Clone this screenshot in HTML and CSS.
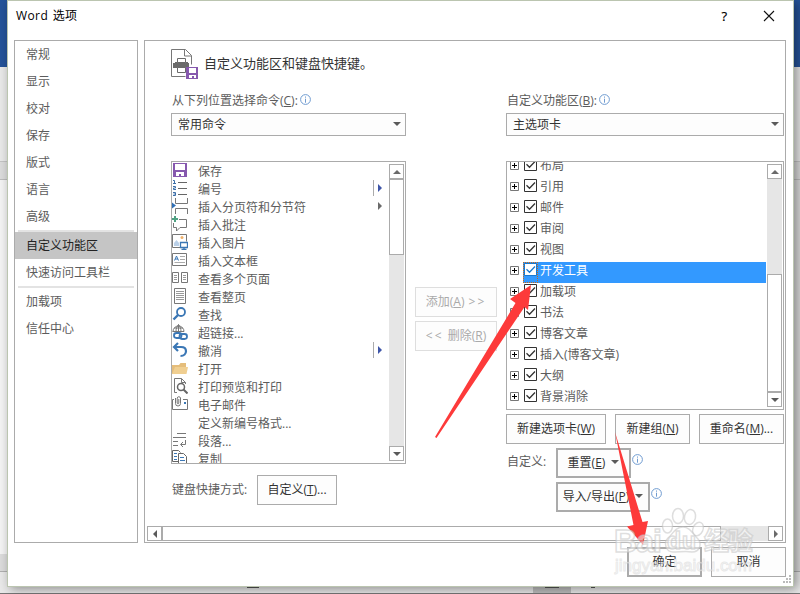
FILE: index.html
```html
<!DOCTYPE html>
<html lang="zh-CN">
  <head>
    <meta charset="UTF-8" />
    <meta name="viewport" content="width=device-width, initial-scale=1.0" />
    <title>Word 选项</title>
    <link rel="stylesheet" href="styles.css">
  </head>

  <body>
    <div class="desktop">
      <div class="app-title"></div>
      <div class="app-ribbon"></div>
      <div class="app-ruler"></div>
      <div class="app-page"></div>
      <div class="app-scroll"></div>
      <div class="app-status">
        <span class="tick t1"></span>
        <span class="view"><span class="tick"></span></span>
        <span class="tick t3"></span>
      </div>
    </div>

    <div class="dialog">
      <div class="titlebar">
        <span class="caption">Word 选项</span>
        <span class="help">?</span>
        <svg class="close" width="12" height="12" viewBox="0 0 12 12"><path d="M1 1l10 10M11 1L1 11" stroke="#111" stroke-width="1.1" /></svg>
      </div>

      <div class="body">
        <ul class="nav">
          <li>常规</li>
          <li>显示</li>
          <li>校对</li>
          <li>保存</li>
          <li>版式</li>
          <li>语言</li>
          <li>高级</li>
          <li class="sep"></li>
          <li class="selected">自定义功能区</li>
          <li>快速访问工具栏</li>
          <li class="sep"></li>
          <li>加载项</li>
          <li>信任中心</li>
        </ul>

        <div class="main">
          <div class="heading">
            <svg width="28" height="32" viewBox="0 0 28 32">
              <path d="M.5 1.500h14l6 6v9M.5 1.500v27h14M13.500 1.500v6.500h7" fill="none" stroke="#777" />
              <path d="M2 15h2v-1h13v1h1v5H2z" fill="#6a6a6a" />
              <path d="M6.500 10.500h8v4h-8zM6.500 19.500h8v5h-8z" fill="#fff" stroke="#6a6a6a" />
              <path d="M15 19h12v12H15z" fill="#8658ae" />
              <path d="M18 20h7v5h-7zM18 27h7v3h-2v-2h-2v2h-3z" fill="#fff" />
            </svg>
            <span>自定义功能区和键盘快捷键。</span>
          </div>

          <div class="columns">
            <div class="left">
              <div class="label">从下列位置选择命令(<u>C</u>):<svg class="info" width="11" height="11" viewBox="0 0 11 11"><circle cx="5.500" cy="5.500" r="4.900" /><path d="M5.500 2.500v1.200M5.500 4.700v4" /></svg></div>
              <div class="select"><span>常用命令</span><i class="down"></i></div>
              <div class="list commands">
                <ul>
                  <li><svg viewBox="0 0 16 16"><path d="M1 1h14v14H1z" fill="#8658ae" /><path d="M3 2h10v6H3zM4 10h8v4H9v-2H7v2H4z" fill="#fff" /></svg>保存</li>
                  <li><svg viewBox="0 0 16 16"><path d="M6 2.500h9M6 8.500h9M6 14.500h9" stroke="#666" /><path d="M1 .5h1.500v3M1 3.500h3M1 6.500h2.500v1.500H1.500v1.500H4M1 12.500h2.500v3H1M1.500 14h2" fill="none" stroke="#3b6ea8" /></svg>编号<i class="right split"></i></li>
                  <li><svg viewBox="0 0 16 16"><path d="M3.500 0v5.500h12V0M3.500 16v-5.500h12V16" fill="none" stroke="#777" /><path d="M0 4.500l4 3-4 3z" fill="#2f6fb5" /></svg>插入分页符和分节符<i class="right plain"></i></li>
                  <li><svg viewBox="0 0 16 16"><path d="M7 3.500h7.500v8H8l-3.500 3.500v-3.500h-3V7" fill="none" stroke="#777" /><path d="M3 0v6M0 3h6" stroke="#4fa283" stroke-width="2" /></svg>插入批注</li>
                  <li><svg viewBox="0 0 16 16"><path d="M8 13.500H.5V.5h14v7" fill="none" stroke="#777" /><circle cx="10" cy="3.500" r="1.500" fill="#efb06a" /><path d="M2 12V9l2.500-3L7 9v3z" fill="#b9cfe7" /><path d="M8.500 8.500h7v5h-7zM12 14v2M9.500 15.500h5" fill="none" stroke="#3b77b5" stroke-width="1.300" /></svg>插入图片</li>
                  <li><svg viewBox="0 0 16 16"><path d="M.5 1.500h14v12H.5z" fill="none" stroke="#777" /><path d="M8 4.500h5M8 7.500h5M2.500 10.500H13" stroke="#aaa" /><path d="M2.500 8.500L4.500 4l2 4.500M3 7h3" fill="none" stroke="#3b77b5" /></svg>插入文本框</li>
                  <li><svg viewBox="0 0 16 16"><path d="M.5 2.500h6v10h-6zM9.500 2.500h6v10h-6z" fill="none" stroke="#777" /><path d="M2 5.500h3M2 7.500h3M2 9.500h3M11 5.500h3M11 7.500h3M11 9.500h3" stroke="#999" /></svg>查看多个页面</li>
                  <li><svg viewBox="0 0 16 16"><path d="M2.500.5h11v15h-11z" fill="none" stroke="#777" /><path d="M4 3.500h8M4 5.500h8M4 7.500h8M4 9.500h8M4 11.500h8" stroke="#999" /></svg>查看整页</li>
                  <li><svg viewBox="0 0 16 16"><circle cx="9" cy="6" r="4" fill="none" stroke="#3b77b5" stroke-width="1.800" /><path d="M6 9l-4.500 4.500" stroke="#3b77b5" stroke-width="2.400" /></svg>查找</li>
                  <li><svg viewBox="0 0 16 16"><path d="M1 7.500a5.500 5.500 0 0 1 11 0M2 4h9M.5 7.500H12M6.500.5v7M4 7.500c0-3 1-5.500 2.500-7C8 2 9 4.500 9 7.500" fill="none" stroke="#777" /><rect x="2" y="9" width="7.500" height="5" rx="2.400" fill="none" stroke="#3b77b5" stroke-width="1.800" /><rect x="7.500" y="10" width="7.500" height="5" rx="2.400" fill="none" stroke="#3b77b5" stroke-width="1.800" /></svg>超链接...</li>
                  <li><svg viewBox="0 0 16 16"><path d="M2 5h7c3.500 0 5 2 5 4.300S12 14 8.500 14M6 1L2 5l4 4" fill="none" stroke="#3b77b5" stroke-width="2.200" /></svg>撤消<i class="right split"></i></li>
                  <li><svg viewBox="0 0 16 16"><path d="M0 14V5h7l1.500-2H14v11z" fill="#e5bd7a" /><path d="M0 14l3-7h13l-1.500 7z" fill="#f0cf91" /></svg>打开</li>
                  <li><svg viewBox="0 0 16 16"><path d="M5 14.500H2.500V.5h7l4 4V6M9.500.5v4h4" fill="none" stroke="#777" /><circle cx="9" cy="9" r="3.500" fill="#fff" stroke="#666" stroke-width="1.500" /><path d="M11.500 11.500l4 4" stroke="#666" stroke-width="2" /></svg>打印预览和打印</li>
                  <li><svg viewBox="0 0 16 16"><path d="M2 3.500H.5v10h15v-10H11" fill="none" stroke="#777" /><path d="M3.500 2v5.500a2.500 2.500 0 0 0 5 0V2a1.700 1.700 0 0 0-3.300 0v5a.8.8 0 0 0 1.600 0V3" fill="none" stroke="#777" /><path d="M12 6h2v2h-2z" fill="#3b77b5" /></svg>电子邮件</li>
                  <li><svg viewBox="0 0 16 16"></svg>定义新编号格式...</li>
                  <li><svg viewBox="0 0 16 16"><path d="M5 1.500h9M1 5.500h13M1 9.500h5M1 13.500h5M13.500 8v4.500H9M11 10l-2.500 2.500L11 15" fill="none" stroke="#777" /></svg>段落...</li>
                  <li><svg viewBox="0 0 16 16"><path d="M6 11.500H.5V.5h6l2 2M6.500 3.500h5l3 3v9h-8z" fill="none" stroke="#666" /><path d="M2 3.500h3M2 6.500h3M2 9.500h3M8 7.500h4M8 10.500h5M8 13.500h5" stroke="#3b77b5" /></svg>复制</li>
                </ul>
                <div class="vscroll">
                  <span class="btn"><i class="up"></i></span>
                  <span class="thumb short"></span>
                  <span class="track"></span>
                  <span class="btn"><i class="down"></i></span>
                </div>
              </div>
              <div class="shortcut">
                <span>键盘快捷方式:</span>
                <button type="button">自定义(<u>T</u>)...</button>
              </div>
            </div>

            <div class="middle">
              <button type="button" disabled>添加(<u>A</u>) <span class="chev">&gt;&gt;</span></button>
              <button type="button" disabled><span class="chev">&lt;&lt;</span> 删除(<u>R</u>)</button>
            </div>

            <div class="rightcol">
              <div class="label">自定义功能区(<u>B</u>):<svg class="info" width="11" height="11" viewBox="0 0 11 11"><circle cx="5.500" cy="5.500" r="4.900" /><path d="M5.500 2.500v1.200M5.500 4.700v4" /></svg></div>
              <div class="select"><span>主选项卡</span><i class="down"></i></div>
              <div class="list tabs">
                <ul id="tabs"></ul>
                <div class="vscroll">
                  <span class="btn"><i class="up"></i></span>
                  <span class="track"></span>
                  <span class="thumb long"></span>
                  <span class="btn"><i class="down"></i></span>
                </div>
              </div>
              <div class="actions">
                <button type="button" class="w100">新建选项卡(<u>W</u>)</button>
                <button type="button" class="w75">新建组(<u>N</u>)</button>
                <button type="button" class="w85">重命名(<u>M</u>)...</button>
              </div>
              <div class="custom">
                <span class="custom-label">自定义:</span>
                <div class="menus">
                  <div><button type="button" class="menu w75"><span>重置(<u>E</u>)</span><i class="down"></i></button><svg class="info" width="11" height="11" viewBox="0 0 11 11"><circle cx="5.500" cy="5.500" r="4.900" /><path d="M5.500 2.500v1.200M5.500 4.700v4" /></svg></div>
                  <div><button type="button" class="menu w94"><span>导入/导出(<u>P</u>)</span><i class="down"></i></button><svg class="info" width="11" height="11" viewBox="0 0 11 11"><circle cx="5.500" cy="5.500" r="4.900" /><path d="M5.500 2.500v1.200M5.500 4.700v4" /></svg></div>
                </div>
              </div>
            </div>
          </div>

          <div class="hscroll">
            <span class="btn"><i class="leftarrow"></i></span>
            <span class="thumb"></span>
            <span class="track"></span>
            <span class="btn"><i class="right"></i></span>
          </div>
        </div>
      </div>

      <div class="footer">
        <button type="button" class="ok">确定</button>
        <button type="button">取消</button>
        <svg class="grip" width="9" height="9" viewBox="0 0 9 9"><path d="M6 0h2v2H6zM3 3h2v2H3zM6 3h2v2H6zM0 6h2v2H0zM3 6h2v2H3zM6 6h2v2H6z" fill="#bbb" /></svg>
      </div>
    </div>

    <!-- red pointers and watermark over the dialog -->
    <svg class="overlay" width="800" height="594" viewBox="0 0 800 594">
      <g fill="#fd3a3a">
        <path d="M531 285l-21 14 5.500 4L435 437l1.500 1L524.500 307l3.500 3z" />
        <path d="M615 432l18.500 93-6.500 1.500L643 545l5-24-5.500 1z" />
      </g>
      <g class="mark">
        <ellipse cx="667.500" cy="526" rx="5" ry="7" />
        <ellipse cx="678" cy="516" rx="5.500" ry="7.500" />
        <ellipse cx="690" cy="517" rx="5.500" ry="7.500" transform="rotate(12 690 517)" />
        <ellipse cx="698" cy="529" rx="5" ry="7" transform="rotate(25 698 529)" />
        <path d="M683 527c-8 0-10 7-15 11-5 5-2 14 5 14 6 0 14-1 19 0 8 0 10-8 6-13-5-5-8-12-15-12z" />
        <text x="614" y="552" font-size="32" textLength="48">Bai</text>
        <text x="667" y="549" font-size="23" textLength="29">du</text>
        <text x="704" y="550" font-size="25" textLength="49">经验</text>
        <text class="site" x="615" y="571" font-size="17" textLength="137">jingyan.baidu.com</text>
      </g>
    </svg>

    <script>
      const tabs = ["布局", "引用", "邮件", "审阅", "视图", "开发工具", "加载项", "书法", "博客文章", "插入(博客文章)", "大纲", "背景消除"];
      document.getElementById("tabs").innerHTML = tabs
        .map((name) => `
          <li class="${name === "开发工具" ? "active" : ""}">
            <svg class="plus" width="9" height="9" viewBox="0 0 9 9"><path d="M.5.5h8v8h-8z" fill="#fff" stroke="#777" /><path d="M2 4.500h5M4.500 2v5" stroke="#000" /></svg>
            <span class="row"><span class="focus"><svg class="check" width="13" height="13" viewBox="0 0 13 13"><path d="M.5.5h12v12H.5z" fill="#fff" /><path d="M2.500 6.200l3 3L11 3.500" fill="none" stroke-width="1.300" /></svg></span>${name}</span>
          </li>`)
        .join("");
    </script>
  </body>
</html>
```
FILE: styles.css
```css
* {
  box-sizing: border-box;
}

body {
  margin: 0;
  width: 800px;
  height: 594px;
  overflow: hidden;
  position: relative;
  font: 12px/16px "Open Sans", "Noto Sans CJK SC", sans-serif;
  color: #5c5c5c;
}

ul {
  list-style: none;
  margin: 0;
  padding: 0;
}

/* application behind the dialog */
.desktop {
  height: 594px;
  display: flex;
  flex-direction: column;
  border-bottom: 1px solid #777;
}

.app-title {
  height: 67px;
  background: #25539a;
}

.app-ribbon {
  height: 95px;
  background: #e9e9e9;
  border-bottom: 1px solid #c4c4c4;
}

.app-ruler {
  height: 18px;
  background: #dcdcdc;
  border-bottom: 1px solid #bdbdbd;
}

.app-page {
  flex: 1;
  background: linear-gradient(90deg, #f4f4f4 50%, #dcdcdc 50%);
}

.app-scroll {
  height: 18px;
  background: #dcdcdc;
  border-bottom: 1px solid #b0b0b0;
}

.app-status {
  height: 21px;
  background: #e9e9e9;
  display: flex;
  align-items: flex-end;
}

.tick {
  width: 14px;
  height: 1px;
  margin-bottom: 5px;
  background: #555;
}

.t1 {
  width: 12px;
  margin-left: 247px;
}

.view {
  display: flex;
  justify-content: center;
  align-items: flex-end;
  width: 38px;
  height: 21px;
  margin-left: 274px;
  background: #bdbdbd;
}

.t3 {
  width: 4px;
  margin-left: 20px;
}

.dialog {
  position: absolute;
  left: 7px;
  top: 0;
  width: 787px;
  height: 587px;
  display: flex;
  flex-direction: column;
  background: #fff;
  border: 1px solid #bbc5b0;
  box-shadow: 3px 2px 10px rgba(0, 0, 0, 0.4);
}

.titlebar {
  height: 39px;
  padding: 7px 18px 0 8px;
  display: flex;
  color: #000;
}

.caption {
  flex: 1;
  letter-spacing: 0.4px;
  word-spacing: 1px;
}

.help {
  margin-right: 36px;
  font-size: 13px;
  -webkit-text-stroke: 0.2px #000;
}

.close {
  margin-top: 2px;
}

.body {
  display: flex;
  gap: 6px;
  height: 503px;
  padding: 0 7px 0 6px;
}

.nav {
  width: 124px;
  border: 1px solid #ababab;
}

.nav li {
  height: 27px;
  padding-left: 11px;
  line-height: 28px;
}

.nav .sep {
  height: 2px;
  margin: 0 3px;
  background: #e3e3e3;
}

.nav .selected {
  background: #c5c5c5;
  color: #222;
}

.main {
  width: 642px;
  display: flex;
  flex-direction: column;
  border: 1px solid #ababab;
}

.heading {
  display: flex;
  gap: 5px;
  height: 51px;
  padding: 7px 0 0 26px;
  font-size: 13px;
  line-height: 30px;
  color: #333;
}

.columns {
  flex: 1;
  display: flex;
  gap: 9px;
  padding-left: 26px;
}

.left {
  width: 235px;
}

.middle {
  width: 82px;
  padding-top: 195px;
  display: flex;
  flex-direction: column;
  gap: 4px;
}

.rightcol {
  width: 278px;
}

.label {
  display: flex;
  height: 21px;
  padding-left: 1px;
  line-height: 18px;
  white-space: nowrap;
}

.info {
  margin: 2px 0 0 2px;
  fill: none;
  stroke: #6f9bd0;
}

.select {
  display: flex;
  align-items: center;
  justify-content: space-between;
  height: 23px;
  padding: 0 4px 0 6px;
  margin-bottom: 25px;
  border: 1px solid #ababab;
  background: #fdfdfd;
  color: #333;
}

.select .down {
  margin-bottom: 2px;
}

/* small triangles */
i {
  display: block;
  width: 0;
  height: 0;
  border: 4px solid transparent;
}

.down {
  border-top-color: #5a5a5a;
  border-bottom-width: 0;
}

.up {
  border-bottom-color: #6a6a6a;
  border-top-width: 0;
}

.right {
  border-left-color: #6a6a6a;
  border-right-width: 0;
}

.leftarrow {
  border-right-color: #5a5a5a;
  border-left-width: 0;
}

.list {
  display: flex;
  border: 1px solid #ababab;
  overflow: hidden;
}

.list ul {
  flex: 1;
}

.commands {
  height: 303px;
}

.commands li {
  display: flex;
  align-items: center;
  height: 18px;
  padding-top: 2px;
  line-height: 18px;
}

.commands li svg {
  width: 16px;
  height: 16px;
  margin: 0 10px 4px 0;
}

.commands .right {
  margin: 0 6px 5px auto;
}

.commands .split {
  border-left-color: #3e55a8;
  position: relative;
}

.commands .split::before {
  content: "";
  position: absolute;
  left: -9px;
  top: -8px;
  height: 16px;
  border-left: 1px solid #ababab;
}

.vscroll {
  width: 15px;
  margin: 2px 1px;
  display: flex;
  flex-direction: column;
}

.btn {
  width: 15px;
  height: 15px;
  flex: none;
  display: flex;
  justify-content: center;
  align-items: center;
  border: 1px solid #ababab;
  background: #fff;
}

.thumb {
  border: 1px solid #ababab;
  background: #fff;
}

.track {
  flex: 1;
  background: #e6e6e6;
}

.short {
  height: 76px;
}

.long {
  height: 118px;
}

.shortcut {
  display: flex;
  justify-content: space-between;
  align-items: center;
  width: 166px;
  padding-left: 1px;
  margin-top: 11px;
  white-space: nowrap;
}

button {
  width: 80px;
  height: 30px;
  flex: none;
  padding: 0;
  border: 1px solid #ababab;
  border-radius: 0;
  background: #fdfdfd;
  color: #333;
  font: inherit;
  white-space: nowrap;
}

button:disabled {
  width: 82px;
  border-color: #dedede;
  color: #aaa;
  word-spacing: 1px;
}

.chev {
  letter-spacing: 2px;
}

.tabs {
  height: 249px;
}

.tabs ul {
  margin-top: -5px;
}

.tabs li {
  display: flex;
  align-items: center;
  gap: 4px;
  height: 21px;
  padding-left: 3px;
}

.plus {
  margin-bottom: 5px;
}

.row {
  flex: 1;
  display: flex;
  gap: 2px;
  height: 21px;
  line-height: 18px;
}

.focus {
  width: 15px;
  height: 21px;
  padding: 1px;
}

.check {
  display: block;
  stroke: #333;
}

.active .row {
  background: #3399ff;
  color: #fff;
}

.active .focus {
  padding: 0;
  border: 1px dotted #c96a14;
}

.active .check {
  stroke: #1979d0;
}

.actions {
  display: flex;
  justify-content: space-between;
  margin-top: 4px;
}

.w100 {
  width: 100px;
}

.w75 {
  width: 75px;
}

.w85 {
  width: 85px;
}

.w94 {
  width: 94px;
}

.custom {
  display: flex;
  margin-top: 4px;
}

.custom-label {
  width: 50px;
  line-height: 28px;
  padding-left: 1px;
}

.menus {
  display: flex;
  flex-direction: column;
  gap: 4px;
}

.menus div {
  display: flex;
}

.menus .info {
  margin: 6px 0 0 1px;
}

.menu {
  display: flex;
  align-items: center;
  justify-content: center;
  gap: 6px;
  border: 2px solid #ababab;
}

.menu i {
  margin-bottom: 2px;
}

.hscroll {
  display: flex;
  margin: 0 2px 1px;
}

.hscroll .thumb {
  width: 559px;
}

.footer {
  display: flex;
  gap: 9px;
  justify-content: flex-end;
  padding: 4px 7px 0 0;
}

.footer button {
  width: 75px;
}

.footer .ok {
  border: 2px solid #ababab;
}

.grip {
  position: absolute;
  right: 1px;
  bottom: 2px;
}

.overlay {
  position: absolute;
  left: 0;
  top: 0;
  pointer-events: none;
}

.mark {
  fill: rgba(255, 255, 255, 0.5);
  stroke: rgba(195, 195, 195, 0.55);
  stroke-width: 1.5;
  font-family: "Liberation Sans", "Noto Sans CJK SC", sans-serif;
  font-weight: bold;
}

.site {
  font-weight: normal;
  stroke: rgba(200, 200, 200, 0.4);
  stroke-width: 1;
}
```
